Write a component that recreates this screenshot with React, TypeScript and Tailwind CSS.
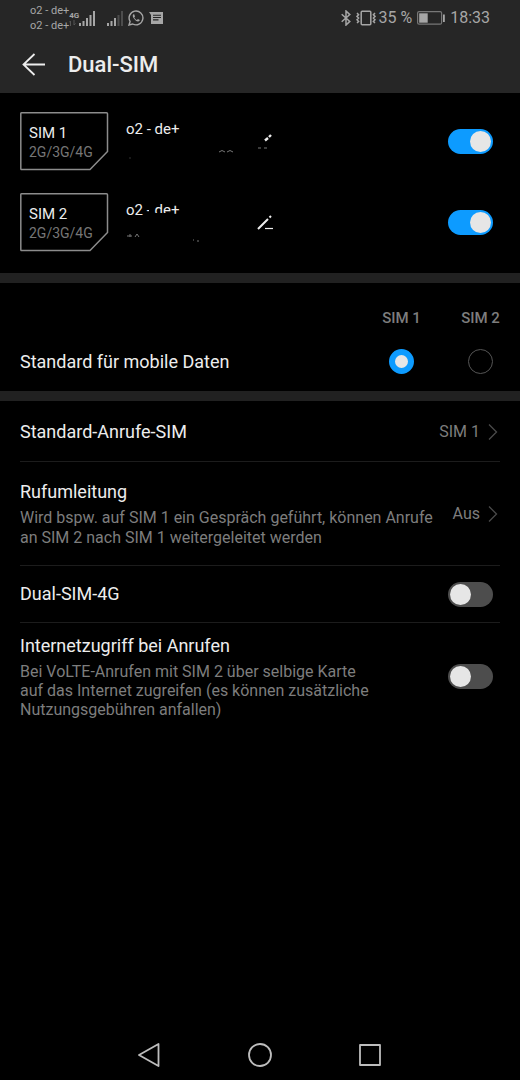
import { useState } from 'react';
import type { ReactNode } from 'react';

interface SwitchProps {
  label: string;
  defaultChecked?: boolean;
}

function Switch({ label, defaultChecked = false }: SwitchProps) {
  return (
    <input
      type="checkbox"
      role="switch"
      aria-label={label}
      defaultChecked={defaultChecked}
      className="mr-[7px] flex h-[25px] w-[45px] shrink-0 appearance-none items-center rounded-full bg-[#4d4d4d] px-[2px] before:size-[21px] before:rounded-full before:bg-[#e6e6e6] before:content-[''] checked:justify-end checked:bg-[#0d9bff]"
    />
  );
}

function Chevron() {
  return (
    <svg className="mr-[2px] h-[18px] w-[10px]" viewBox="0 0 10 18" fill="none" stroke="#4a4a4a" strokeWidth="1.3">
      <path d="M1 1.5L8.5 9L1 16.5" />
    </svg>
  );
}

function Signal({ bars }: { bars: number }) {
  return (
    <svg className="h-[15px] w-4" viewBox="0 0 16 15" fill="#a6a6a6">
      {[3, 5, 8, 11, 15].map((h, i) => (
        <rect key={h} x={i * 3.5} y={15 - h} width="2" height={h} opacity={i < bars ? 1 : 0.3} />
      ))}
    </svg>
  );
}

function StatusBar() {
  return (
    <div className="flex h-9 items-center px-[30px] text-[#a6a6a6]">
      <div className="text-[11px] leading-[15px] whitespace-pre">
        <div>o2 - de+</div>
        <div>o2 - de+</div>
      </div>
      <div className="flex w-[10px] flex-col items-start">
        <span className="text-[8px] leading-[9px] font-bold">4G</span>
        <svg className="h-[6px] w-[7px]" viewBox="0 0 7 6" stroke="#555" fill="none">
          <path d="M1.5 6V1L0 2.5M5 0V5L6.5 3.5" />
        </svg>
      </div>
      <Signal bars={5} />
      <div className="ml-3 flex items-center gap-[5px]">
        <Signal bars={3} />
        <svg className="size-4" viewBox="0 0 16 16" fill="none" stroke="#a6a6a6" strokeWidth="1.4">
          <path d="M1 15L2.1 11.5A6.9 6.9 0 1 1 4.7 14Z" />
          <path d="M5.4 4.2C4.4 5 4.6 6.4 5.6 8C6.8 9.9 8.4 11.3 10.1 11.5C11 11.5 11.7 11 11.8 10.1L9.9 9.1L9 10.1C7.7 9.6 6.8 8.6 6.2 7.4L7 6.4L6.2 4.3Z" fill="#a6a6a6" stroke="none" />
        </svg>
        <svg className="h-3 w-[14px]" viewBox="0 0 14 12" fill="#a6a6a6">
          <path fillRule="evenodd" d="M0 0H14V12H2V3ZM4 2.7V3.8H12V2.7ZM4 5V6.1H12V5ZM4 7.3V8.4H9.5V7.3Z" />
        </svg>
      </div>
      <div className="ml-auto flex items-center">
        <svg className="h-4 w-[10px]" viewBox="0 0 10 16" fill="none" stroke="#a6a6a6" strokeWidth="1.5">
          <path d="M.7 4.2L8.8 11.4L5 15V1L8.8 4.6L.7 11.8" />
        </svg>
        <svg className="ml-[5px] h-4 w-5" viewBox="0 0 20 16" fill="none" stroke="#a6a6a6" strokeWidth="1.5">
          <rect x="5.2" y="1.2" width="9.6" height="13.6" rx="1" />
          <path d="M1 3L2.6 4.7L1 6.4L2.6 8.1L1 9.8L2.6 11.5L1 13M19 3L17.4 4.7L19 6.4L17.4 8.1L19 9.8L17.4 11.5L19 13" />
        </svg>
        <span className="ml-[2px] text-base leading-5">35 %</span>
        <svg className="ml-[5px] h-[14px] w-7" viewBox="0 0 28 14" fill="none">
          <rect x=".6" y=".6" width="24" height="12.6" rx="1.5" stroke="#777" strokeWidth="1.2" />
          <rect x="2.2" y="2.3" width="8.5" height="9.4" fill="#a6a6a6" />
          <rect x="26" y="3.5" width="1.8" height="7.5" fill="#a6a6a6" />
        </svg>
        <span className="ml-[5px] text-base leading-5">18:33</span>
      </div>
    </div>
  );
}

interface SimRowProps {
  name: string;
  carrier: string;
  scribble: ReactNode;
  pencil: ReactNode;
}

function SimRow({ name, carrier, scribble, pencil }: SimRowProps) {
  return (
    <div className="flex items-center">
      <div className="relative h-[59px] w-[89px] shrink-0 pt-[11px] pl-[9px]">
        <svg className="absolute inset-0 size-full" viewBox="0 0 89 59" fill="none" stroke="#8c8c8c" strokeWidth="1.5">
          <path d="M1.5 .8H86.5Q87.5 .8 87.5 1.8V39.5L70 57.5H1.5Q.8 57.5 .8 56.5V1.8Q.8 .8 1.5 .8Z" />
        </svg>
        <div className="text-[15px] leading-5">{name}</div>
        <div className="text-sm leading-[18px] text-[#767676]">2G/3G/4G</div>
      </div>
      <div className="relative ml-[17px] h-[59px] w-[156px] pt-[7px] text-[15px] leading-5">
        {carrier}
        <svg className="pointer-events-none absolute inset-0 size-full" viewBox="0 0 156 59" fill="none">
          {scribble}
        </svg>
        <button type="button" aria-label={`${name} bearbeiten`} className="absolute top-5 right-2 size-5">
          <svg className="size-5" viewBox="0 0 20 20" stroke="#ededed" strokeWidth="2" fill="none">
            {pencil}
          </svg>
        </button>
      </div>
      <div className="ml-auto flex">
        <Switch label={name} defaultChecked />
      </div>
    </div>
  );
}

export default function App() {
  const [dataSim, setDataSim] = useState(1);

  return (
    <div className="flex min-h-screen flex-col bg-black font-['Roboto',sans-serif] text-[#ededed]">
      <header className="bg-[#262626]">
        <StatusBar />
        <div className="flex h-[57px] items-center px-[22px]">
          <button type="button" aria-label="Zurück" className="size-6">
            <svg className="size-6" viewBox="0 0 24 24" fill="none" stroke="#ededed" strokeWidth="1.8">
              <path d="M12.5 1L1.5 11.5L12.5 22M1.5 11.5H23" />
            </svg>
          </button>
          <h1 className="ml-[22px] text-[22px] leading-7 font-medium">Dual-SIM</h1>
        </div>
      </header>

      <main className="flex-1">
        <section className="flex flex-col gap-[22px] px-5 pt-[19px] pb-[21px]">
          <SimRow
            name="SIM 1"
            carrier="o2 - de+"
            scribble={
              <g stroke="#777">
                <path d="M93 40Q96 37 99 40M101 40Q104 37 107 40M132 36H135M138 36H141" />
                <path d="M3 46H5" stroke="#333" />
              </g>
            }
            pencil={<path d="M11 8.5L14 6M15 5L17 3" strokeWidth="2.4" />}
          />
          <SimRow
            name="SIM 2"
            carrier="o2 - de+"
            scribble={
              <>
                <path d="M23 14H27V20H23ZM28 20H45V26H28Z" fill="#000" />
                <path d="M1 43H6M4 41V44M9 44L11 41L13 44M67 47H68M71 48H73" stroke="#777" />
              </>
            }
            pencil={
              <>
                <path d="M4 16L14 6M15.5 4.5L17 3" />
                <path d="M11 15.5H19" strokeWidth="1.2" />
              </>
            }
          />
        </section>

        <section className="border-y-10 border-[#212121] px-5 pt-[25px]">
          <div className="flex justify-end text-[15px] leading-5 font-medium text-[#7d7d7d]">
            <span className="w-[39px] text-center">SIM 1</span>
            <span className="ml-10 w-[39px] text-center">SIM 2</span>
          </div>
          <fieldset className="mt-1 flex h-[59px] items-center text-lg leading-6">
            <span>Standard für mobile Daten</span>
            <div className="ml-auto flex gap-[54px] pr-[7px]">
              {[1, 2].map(n => (
                <input
                  key={n}
                  type="radio"
                  name="data-sim"
                  aria-label={`Standard für mobile Daten: SIM ${n}`}
                  checked={dataSim === n}
                  onChange={() => setDataSim(n)}
                  className="size-[25px] appearance-none rounded-full border border-[#555] checked:border-[6px] checked:border-[#0d9bff] checked:bg-[#e6e6e6]"
                />
              ))}
            </div>
          </fieldset>
        </section>

        <section className="px-5">
          <button type="button" className="flex h-[61px] w-full items-center border-b border-[#1c1c1c] pt-[2px] text-left">
            <span className="text-lg leading-6">Standard-Anrufe-SIM</span>
            <span className="ml-auto text-base leading-5 text-[#7d7d7d]">SIM 1</span>
            <span className="ml-2"><Chevron /></span>
          </button>
          <button type="button" className="flex h-[104px] w-full items-center border-b border-[#1c1c1c] text-left">
            <span className="flex-1">
              <span className="block text-lg leading-6">Rufumleitung</span>
              <span className="mt-1 block text-base leading-5 text-[#7d7d7d]">
                Wird bspw. auf SIM 1 ein Gespräch geführt, können Anrufe an SIM 2 nach SIM 1 weitergeleitet werden
              </span>
            </span>
            <span className="ml-2 text-base leading-5 text-[#7d7d7d]">Aus</span>
            <span className="ml-2"><Chevron /></span>
          </button>
          <div className="flex h-[57px] items-center border-b border-[#1c1c1c]">
            <span className="flex-1 text-lg leading-6">Dual-SIM-4G</span>
            <Switch label="Dual-SIM-4G" />
          </div>
          <div className="flex h-[106px] items-center">
            <div className="max-w-[360px]">
              <div className="text-lg leading-6">Internetzugriff bei Anrufen</div>
              <p className="mt-1 text-base leading-[19px] text-[#7d7d7d]">
                Bei VoLTE-Anrufen mit SIM 2 über selbige Karte auf das Internet zugreifen (es können zusätzliche Nutzungsgebühren anfallen)
              </p>
            </div>
            <div className="ml-auto flex">
              <Switch label="Internetzugriff bei Anrufen" />
            </div>
          </div>
        </section>
      </main>

      <nav className="flex h-[50px] items-center justify-center gap-[86px]">
        <button type="button" aria-label="Zurück">
          <svg className="size-6" viewBox="0 0 24 24" fill="none" stroke="#bdbdbd" strokeWidth="1.8" strokeLinejoin="round">
            <path d="M20.5 1V23L1 12Z" />
          </svg>
        </button>
        <button type="button" aria-label="Startbildschirm">
          <svg className="size-6" viewBox="0 0 24 24" fill="none" stroke="#bdbdbd" strokeWidth="1.8">
            <circle cx="12" cy="12" r="11" />
          </svg>
        </button>
        <button type="button" aria-label="Letzte Apps">
          <svg className="size-6" viewBox="0 0 24 24" fill="none" stroke="#bdbdbd" strokeWidth="1.8" strokeLinejoin="round">
            <path d="M2 2H22V22H2Z" />
          </svg>
        </button>
      </nav>
    </div>
  );
}
